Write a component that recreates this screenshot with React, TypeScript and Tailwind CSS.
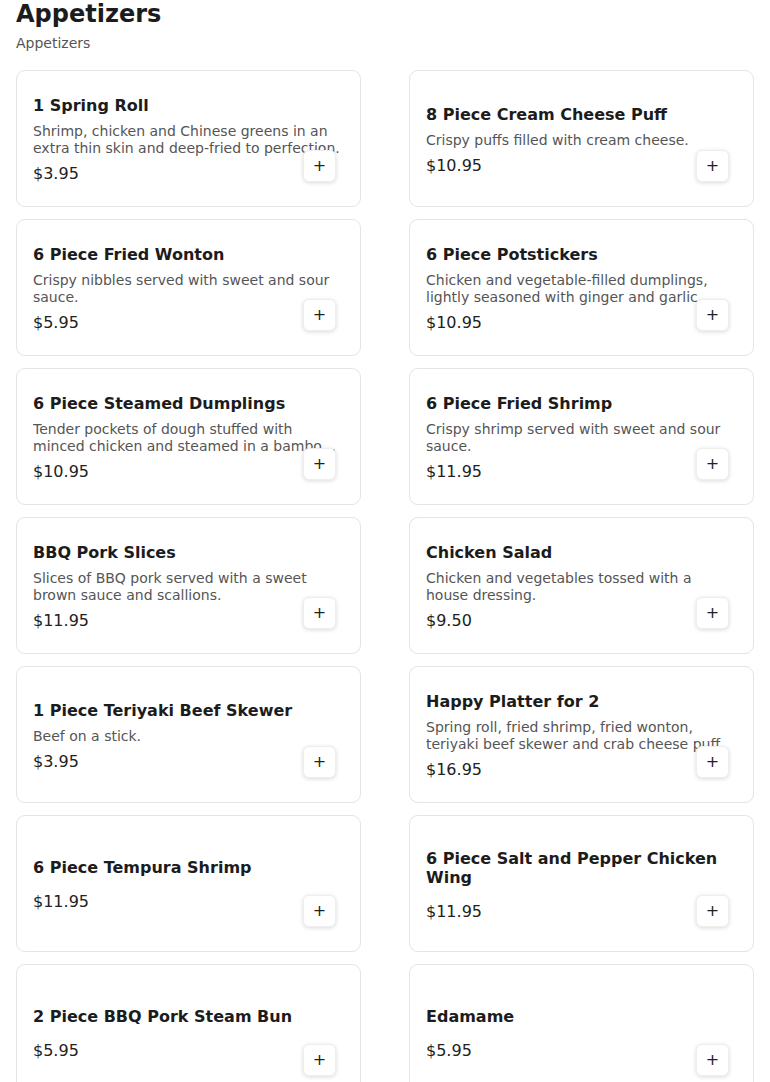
import React from 'react'

interface Item {
  id: number
  nome: string
  desc?: string
  preco: string
}

const ITENS: Item[] = [
  { id: 1, nome: '1 Spring Roll', desc: 'Shrimp, chicken and Chinese greens in an extra thin skin and deep-fried to perfection.', preco: '$3.95' },
  { id: 2, nome: '8 Piece Cream Cheese Puff', desc: 'Crispy puffs filled with cream cheese.', preco: '$10.95' },
  { id: 3, nome: '6 Piece Fried Wonton', desc: 'Crispy nibbles served with sweet and sour sauce.', preco: '$5.95' },
  { id: 4, nome: '6 Piece Potstickers', desc: 'Chicken and vegetable-filled dumplings, lightly seasoned with ginger and garlic.', preco: '$10.95' },
  { id: 5, nome: '6 Piece Steamed Dumplings', desc: 'Tender pockets of dough stuffed with minced chicken and steamed in a bamboo basket.', preco: '$10.95' },
  { id: 6, nome: '6 Piece Fried Shrimp', desc: 'Crispy shrimp served with sweet and sour sauce.', preco: '$11.95' },
  { id: 7, nome: 'BBQ Pork Slices', desc: 'Slices of BBQ pork served with a sweet brown sauce and scallions.', preco: '$11.95' },
  { id: 8, nome: 'Chicken Salad', desc: 'Chicken and vegetables tossed with a house dressing.', preco: '$9.50' },
  { id: 9, nome: '1 Piece Teriyaki Beef Skewer', desc: 'Beef on a stick.', preco: '$3.95' },
  { id: 10, nome: 'Happy Platter for 2', desc: 'Spring roll, fried shrimp, fried wonton, teriyaki beef skewer and crab cheese puff.', preco: '$16.95' },
  { id: 11, nome: '6 Piece Tempura Shrimp', preco: '$11.95' },
  { id: 12, nome: '6 Piece Salt and Pepper Chicken Wing', preco: '$11.95' },
  { id: 13, nome: '2 Piece BBQ Pork Steam Bun', preco: '$5.95' },
  { id: 14, nome: 'Edamame', preco: '$5.95' },
]

function Card({ item }: { item: Item }) {
  return (
    <div className="relative h-[137px] rounded-[9px] border border-[#e4e4e4] bg-white px-4 pt-1 flex flex-col justify-center">
      <div className="mb-2 font-bold text-base leading-[19px] text-[#1c1c1c]">{item.nome}</div>
      {item.desc && (
        <div className="text-sm leading-[17px] text-[#555] line-clamp-2 overflow-hidden">{item.desc}</div>
      )}
      <div className="mt-[6px] text-base leading-[22px] text-[#222]">{item.preco}</div>
      <button className="absolute right-6 bottom-6 w-[33px] h-[32px] rounded-md bg-white border border-[#eeeeee] shadow-[0_1px_4px_rgba(0,0,0,0.15)] flex items-center justify-center text-base font-medium text-[#222]">
        +
      </button>
    </div>
  )
}

export default function App() {
  return (
    <div className="min-h-screen bg-white px-4 font-['DejaVu_Sans',sans-serif]">
      <div className="text-2xl font-bold leading-7 text-[#1c1c1c]">Appetizers</div>
      <div className="mt-[5px] text-sm leading-5 text-[#555]">Appetizers</div>
      <div className="mt-[17px] grid grid-cols-2 gap-x-12 gap-y-3">
        {ITENS.map(item => <Card key={item.id} item={item} />)}
      </div>
    </div>
  )
}
